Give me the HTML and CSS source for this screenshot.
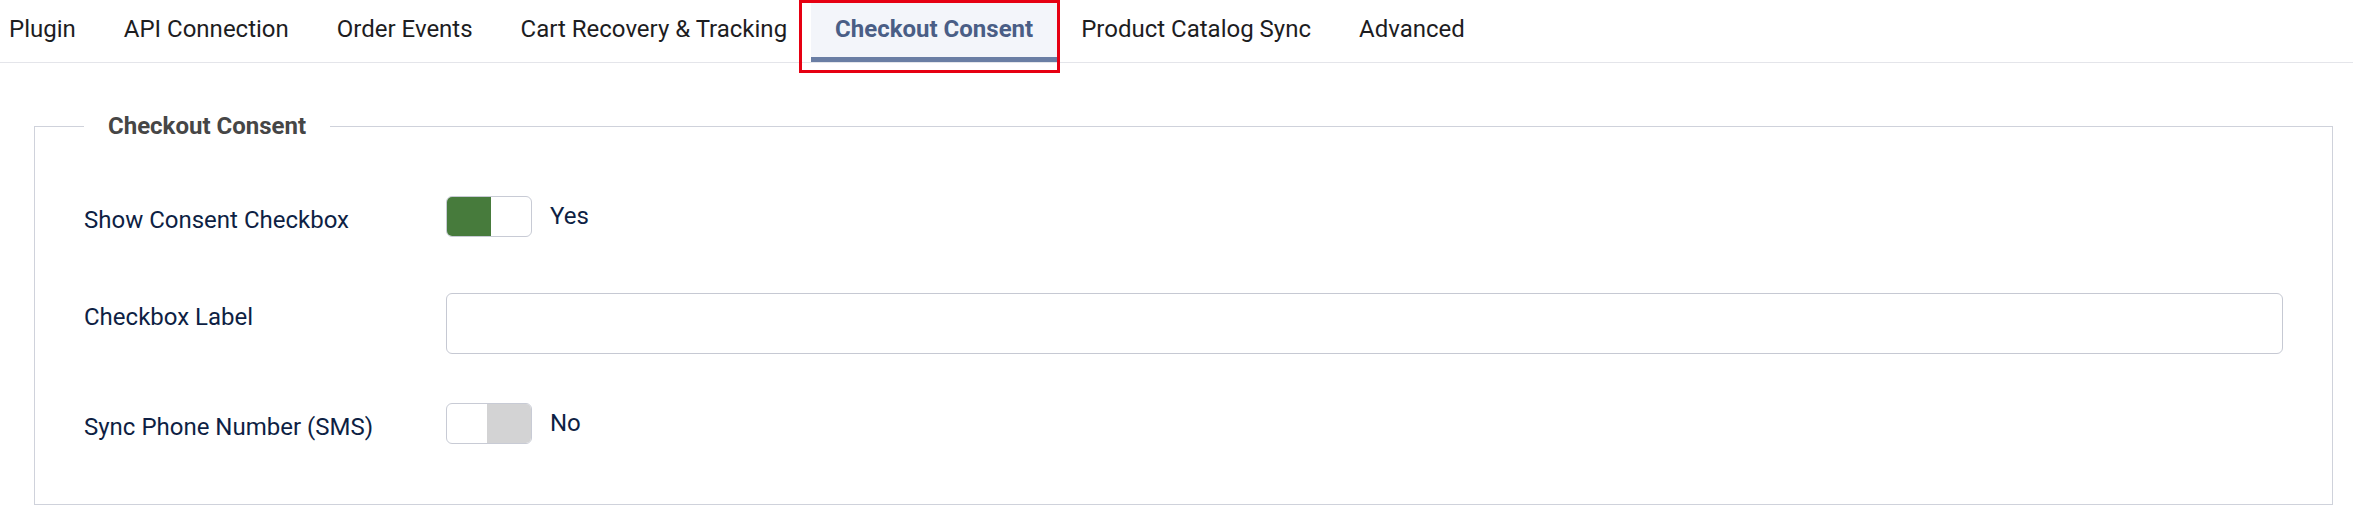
FILE: index.html
```html
<!DOCTYPE html>
<html lang="en">
<head>
<meta charset="UTF-8">
<meta name="viewport" content="width=device-width, initial-scale=1.0">
<title>Checkout Consent</title>
<link rel="stylesheet" href="styles.css">
</head>
<body>
<nav class="tabs">
    <a href="#" class="tab">Plugin</a>
    <a href="#" class="tab">API Connection</a>
    <a href="#" class="tab">Order Events</a>
    <a href="#" class="tab">Cart Recovery &amp; Tracking</a>
    <a href="#" class="tab active">Checkout Consent<span class="highlight"></span></a>
    <a href="#" class="tab">Product Catalog Sync</a>
    <a href="#" class="tab">Advanced</a>
</nav>

<div class="tab-panel">
    <fieldset class="settings">
        <legend>Checkout Consent</legend>

        <div class="form-row">
            <label class="field-label">Show Consent Checkbox</label>
            <div class="switch-field">
                <span class="switch on"><span class="knob"></span></span>
                <span class="switch-text">Yes</span>
            </div>
        </div>

        <div class="form-row">
            <label class="field-label" for="consentLabel">Checkbox Label</label>
            <input type="text" id="consentLabel" class="text-input">
        </div>

        <div class="form-row">
            <label class="field-label">Sync Phone Number (SMS)</label>
            <div class="switch-field">
                <span class="switch off"><span class="knob"></span></span>
                <span class="switch-text">No</span>
            </div>
        </div>
    </fieldset>
</div>
</body>
</html>
```

FILE: styles.css
```css
body {
    margin: 0;
    font-family: Roboto, "Noto Sans", Arial, sans-serif;
    background: #fff;
    color: #0e1f44;
}

/* tab strip */
.tabs {
    display: flex;
    margin-left: -15px;
    border-bottom: 1px solid #e4e5ea;
    position: relative;
}
.tab {
    display: block;
    padding: 11px 24px 10px;
    border-bottom: 5px solid transparent;
    font-size: 24px;
    line-height: 36px;
    color: #1d1d1f;
    text-decoration: none;
}
.tab.active {
    position: relative;
    background: #f3f5fa;
    border-bottom-color: #6a7ea4;
    color: #4a5e86;
    font-weight: 700;
}
.highlight {
    position: absolute;
    left: -12px;
    right: -3px;
    top: 0;
    height: 73px;
    box-sizing: border-box;
    border: 3px solid #e60012;
    pointer-events: none;
}

/* settings panel */
.tab-panel { padding: 45px 20px 0 34px; }
.settings {
    margin: 0;
    min-width: 0;
    border: 1px solid #cfd2db;
    padding: 52px 49px 53px;
}
.settings legend {
    padding: 0 24px;
    font-size: 24px;
    line-height: 36px;
    font-weight: 700;
    color: #464646;
}

.form-row {
    display: flex;
    align-items: flex-start;
    margin-bottom: 49px;
}
.form-row:last-child { margin-bottom: 0; }
.field-label {
    flex: 0 0 362px;
    padding-top: 6px;
    font-size: 24px;
    line-height: 36px;
    color: #0e1f44;
}
.text-input {
    flex: 1;
    height: 61px;
    box-sizing: border-box;
    border: 1px solid #c6c9d3;
    border-radius: 6px;
    padding: 0 16px;
    font: inherit;
    font-size: 24px;
}

/* yes/no switch */
.switch-field {
    display: flex;
    align-items: flex-start;
    gap: 18px;
    height: 48px;
}
.switch {
    display: flex;
    width: 86px;
    height: 41px;
    box-sizing: border-box;
    border: 1px solid #c8cbd5;
    border-radius: 6px;
    overflow: hidden;
    background: #fff;
}
.switch.off { justify-content: flex-end; }
.knob { width: 44px; }
.switch.on .knob { background: #477b3c; margin: -1px 0 -1px -1px; width: 45px; }
.switch.off .knob { background: #d3d3d4; }
.switch-text {
    font-size: 24px;
    line-height: 41px;
    color: #0e1f44;
}
```
